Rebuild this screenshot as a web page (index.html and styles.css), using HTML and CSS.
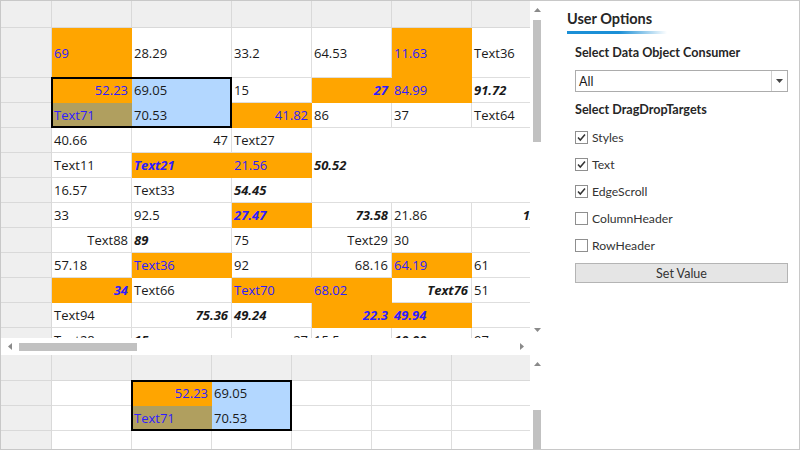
FILE: index.html
```html
<!DOCTYPE html>
<html>
<head>
<meta charset="utf-8">
<link rel="stylesheet" href="styles.css">
</head>
<body>
<div class="app">
  <div class="left">
    <div class="pane top">
      <div class="pane-row">
        <div class="viewport vp-top">
          <div class="grid g-top">
            <div class="c hd"></div><div class="c hd"></div><div class="c hd"></div><div class="c hd"></div><div class="c hd"></div><div class="c hd"></div><div class="c hd"></div>

            <div class="c rh"></div><div class="c o b">69</div><div class="c">28.29</div><div class="c">33.2</div><div class="c">64.53</div><div class="c o b">11.63</div><div class="c">Text36</div>

            <div class="c rh"></div><div class="c o b r">52.23</div><div class="c lb">69.05</div><div class="c">15</div><div class="c o b bi r">27</div><div class="c o b">84.99</div><div class="c bi">91.72</div>

            <div class="c rh"></div><div class="c ol b">Text71</div><div class="c lb">70.53</div><div class="c o b r">41.82</div><div class="c">86</div><div class="c">37</div><div class="c">Text64</div>

            <div class="c merged bi">50.52</div>

            <div class="c rh"></div><div class="c">40.66</div><div class="c r">47</div><div class="c">Text27</div>

            <div class="c rh"></div><div class="c">Text11</div><div class="c o b bi">Text21</div><div class="c o b">21.56</div>

            <div class="c rh"></div><div class="c">16.57</div><div class="c">Text33</div><div class="c bi">54.45</div>

            <div class="c rh"></div><div class="c">33</div><div class="c">92.5</div><div class="c o b bi">27.47</div><div class="c bi r">73.58</div><div class="c">21.86</div><div class="c bi r">12.5</div>

            <div class="c rh"></div><div class="c r">Text88</div><div class="c bi">89</div><div class="c">75</div><div class="c r">Text29</div><div class="c">30</div><div class="c"></div>

            <div class="c rh"></div><div class="c">57.18</div><div class="c o b">Text36</div><div class="c">92</div><div class="c r">68.16</div><div class="c o b">64.19</div><div class="c">61</div>

            <div class="c rh"></div><div class="c o b bi r">34</div><div class="c">Text66</div><div class="c o b">Text70</div><div class="c o b">68.02</div><div class="c bi r">Text76</div><div class="c">51</div>

            <div class="c rh"></div><div class="c">Text94</div><div class="c bi r">75.36</div><div class="c bi">49.24</div><div class="c o b bi r">22.3</div><div class="c o b bi">49.94</div><div class="c"></div>

            <div class="c rh"></div><div class="c">Text28</div><div class="c bi">15</div><div class="c r">27</div><div class="c">15.5</div><div class="c bi">10.00</div><div class="c">97</div>

            <div class="sel sel-top"></div>
          </div>
        </div>
        <div class="vscroll vs-top">
          <div class="arr-box"><svg width="7" height="4" viewBox="0 0 7 4"><path d="M0 4 L3.5 0 L7 4 Z" fill="#8a8a8a"/></svg></div>
          <div class="thumb-v tv-top"></div>
          <div class="spacer"></div>
          <div class="arr-box"><svg width="7" height="4" viewBox="0 0 7 4"><path d="M0 0 L3.5 4 L7 0 Z" fill="#8a8a8a"/></svg></div>
        </div>
      </div>
      <div class="hscroll">
        <div class="arr-box-h"><svg width="4" height="7" viewBox="0 0 4 7"><path d="M4 0 L0 3.5 L4 7 Z" fill="#8a8a8a"/></svg></div>
        <div class="thumb-h"></div>
        <div class="spacer"></div>
        <div class="arr-box-h"><svg width="4" height="7" viewBox="0 0 4 7"><path d="M0 0 L4 3.5 L0 7 Z" fill="#8a8a8a"/></svg></div>
        <div class="corner"></div>
      </div>
    </div>
    <div class="pane bottom">
      <div class="pane-row">
        <div class="viewport vp-bottom">
          <div class="grid g-bottom">
            <div class="c hd"></div><div class="c hd"></div><div class="c hd"></div><div class="c hd"></div><div class="c hd"></div><div class="c hd"></div><div class="c hd"></div>
            <div class="c rh"></div><div class="c"></div><div class="c o b r">52.23</div><div class="c lb">69.05</div><div class="c"></div><div class="c"></div><div class="c"></div>
            <div class="c rh"></div><div class="c"></div><div class="c ol b">Text71</div><div class="c lb">70.53</div><div class="c"></div><div class="c"></div><div class="c"></div>
            <div class="c rh"></div><div class="c"></div><div class="c"></div><div class="c"></div><div class="c"></div><div class="c"></div><div class="c"></div>
            <div class="sel sel-bottom"></div>
          </div>
        </div>
        <div class="vscroll vs-bottom">
          <div class="arr-box"><svg width="7" height="4" viewBox="0 0 7 4"><path d="M0 4 L3.5 0 L7 4 Z" fill="#8a8a8a"/></svg></div>
          <div class="thumb-v tv-bottom"></div>
        </div>
      </div>
    </div>
  </div>

  <div class="panel">
    <div class="title">User Options</div>
    <div class="title-bar"></div>
    <div class="section">
      <div class="label first">Select Data Object Consumer</div>
      <div class="combo">
        <span class="combo-text">All</span>
        <span class="combo-btn"><svg width="7" height="4" viewBox="0 0 7 4"><path d="M0 0 L7 0 L3.5 4 Z" fill="#444"/></svg></span>
      </div>
      <div class="label second">Select DragDropTargets</div>
      <div class="checks">
        <div class="chk"><span class="box"><svg width="11" height="11" viewBox="0 0 11 11"><path d="M2 5.5 L4.3 8 L9 2.5" fill="none" stroke="#333" stroke-width="1.5"/></svg></span><span>Styles</span></div>
        <div class="chk"><span class="box"><svg width="11" height="11" viewBox="0 0 11 11"><path d="M2 5.5 L4.3 8 L9 2.5" fill="none" stroke="#333" stroke-width="1.5"/></svg></span><span>Text</span></div>
        <div class="chk"><span class="box"><svg width="11" height="11" viewBox="0 0 11 11"><path d="M2 5.5 L4.3 8 L9 2.5" fill="none" stroke="#333" stroke-width="1.5"/></svg></span><span>EdgeScroll</span></div>
        <div class="chk"><span class="box"></span><span>ColumnHeader</span></div>
        <div class="chk"><span class="box"></span><span>RowHeader</span></div>
      </div>
      <div class="btn">Set Value</div>
    </div>
  </div>
</div>
</body>
</html>
```
FILE: styles.css
```css
* { box-sizing: border-box; }
html, body { margin: 0; padding: 0; background: #fff; }
body { font-family: "Open Sans", "Noto Sans", sans-serif; font-size: 13px; color: #1a1a1a; }

.app {
  width: 800px; height: 450px;
  border: 1px solid #c8c8c8;
  display: flex;
  overflow: hidden;
}
.left { width: 543px; display: flex; flex-direction: column; }
.pane-row { display: flex; }

.viewport { width: 529px; overflow: hidden; }
.vp-top { height: 337px; }
.vp-bottom { height: 94px; }

.grid { display: grid; position: relative; }
.g-top {
  grid-template-columns: 51px 80px 100px 80px 80px 80px 80px;
  grid-template-rows: 27px 50px repeat(11, 25px);
}
.g-bottom {
  grid-template-columns: 51px repeat(6, 80px);
  grid-template-rows: 26px 25px 25px 25px;
}

.c {
  border-right: 1px solid #dedede;
  border-bottom: 1px solid #dedede;
  display: flex; align-items: center;
  padding: 0 2px;
  white-space: nowrap; overflow: hidden;
  background: #fff;
}
.c.r { justify-content: flex-end; padding-right: 3px; }
.c.hd, .c.rh { background: #efefef; border-color: #d9d9d9; }
.c.o { background: #ffa500; border-color: #ffa500; }
.c.lb { background: #b3d7ff; border-color: #b3d7ff; }
.c.ol { background: #b09f5f; border-color: #b09f5f; }
.c.b { color: #2f1cff; }
.c.bi { font-weight: 700; font-style: italic; }
.merged { grid-column: 5 / span 3; grid-row: 5 / span 3; }

.sel {
  position: absolute;
  top: -1px; left: -1px; right: 0; bottom: 0;
  border: 2px solid #000;
}
.sel-top { grid-column: 2 / 4; grid-row: 3 / 5; }
.sel-bottom { grid-column: 3 / 5; grid-row: 2 / 4; }

.vscroll { width: 14px; display: flex; flex-direction: column; align-items: stretch; }
.vs-top { height: 337px; }
.vs-bottom { height: 94px; }
.arr-box { height: 17px; display: flex; align-items: center; justify-content: center; padding-left: 1px; }
.thumb-v { margin-left: 3px; width: 8px; background: #c1c1c1; }
.tv-top { margin-top: 2px; height: 122px; }
.tv-bottom { margin-top: 38px; flex: 1; }
.spacer { flex: 1; }

.hscroll { height: 17px; display: flex; align-items: center; }
.arr-box-h { width: 17px; height: 17px; display: flex; align-items: center; justify-content: center; }
.thumb-h { margin-left: 1px; width: 118px; height: 8px; background: #c1c1c1; }
.corner { width: 14px; }

.panel {
  flex: 1; padding: 8px 11px 0 23px; color: #2b2b2b;
  font-family: "Lato", "Open Sans", sans-serif;
}
.title { font-size: 14.5px; font-weight: 700; line-height: 20px; color: #262626; }
.title-bar {
  width: 100px; height: 3px; margin-top: 2px;
  background: linear-gradient(to right, #1b8fd6 0%, #1b8fd6 52%, rgba(27,143,214,0) 100%);
}
.section { padding-left: 8px; }
.label { font-size: 12.6px; font-weight: 700; line-height: 18px; color: #262626; }
.label.first { margin-top: 10px; }
.label.second { margin-top: 9px; }
.combo {
  margin-top: 8px; height: 22px;
  border: 1px solid #acacac;
  display: flex; align-items: center;
}
.combo-text { flex: 1; padding-left: 3px; font-size: 12.5px; color: #1a1a1a; }
.combo-btn {
  width: 16px; height: 100%;
  border-left: 1px solid #d0d0d0;
  display: flex; align-items: center; justify-content: center;
}
.checks { margin-top: 5px; }
.chk { height: 27px; display: flex; align-items: center; gap: 4px; font-size: 12.2px; color: #333; }
.box {
  width: 13px; height: 13px; border: 1px solid #8f8f8f; background: #fff;
  display: flex; align-items: center; justify-content: center;
}
.btn {
  margin-top: 4px; height: 20px;
  background: #e5e5e5; border: 1px solid #b4b4b4;
  display: flex; align-items: center; justify-content: center;
  font-size: 12.5px; color: #333;
}
```
